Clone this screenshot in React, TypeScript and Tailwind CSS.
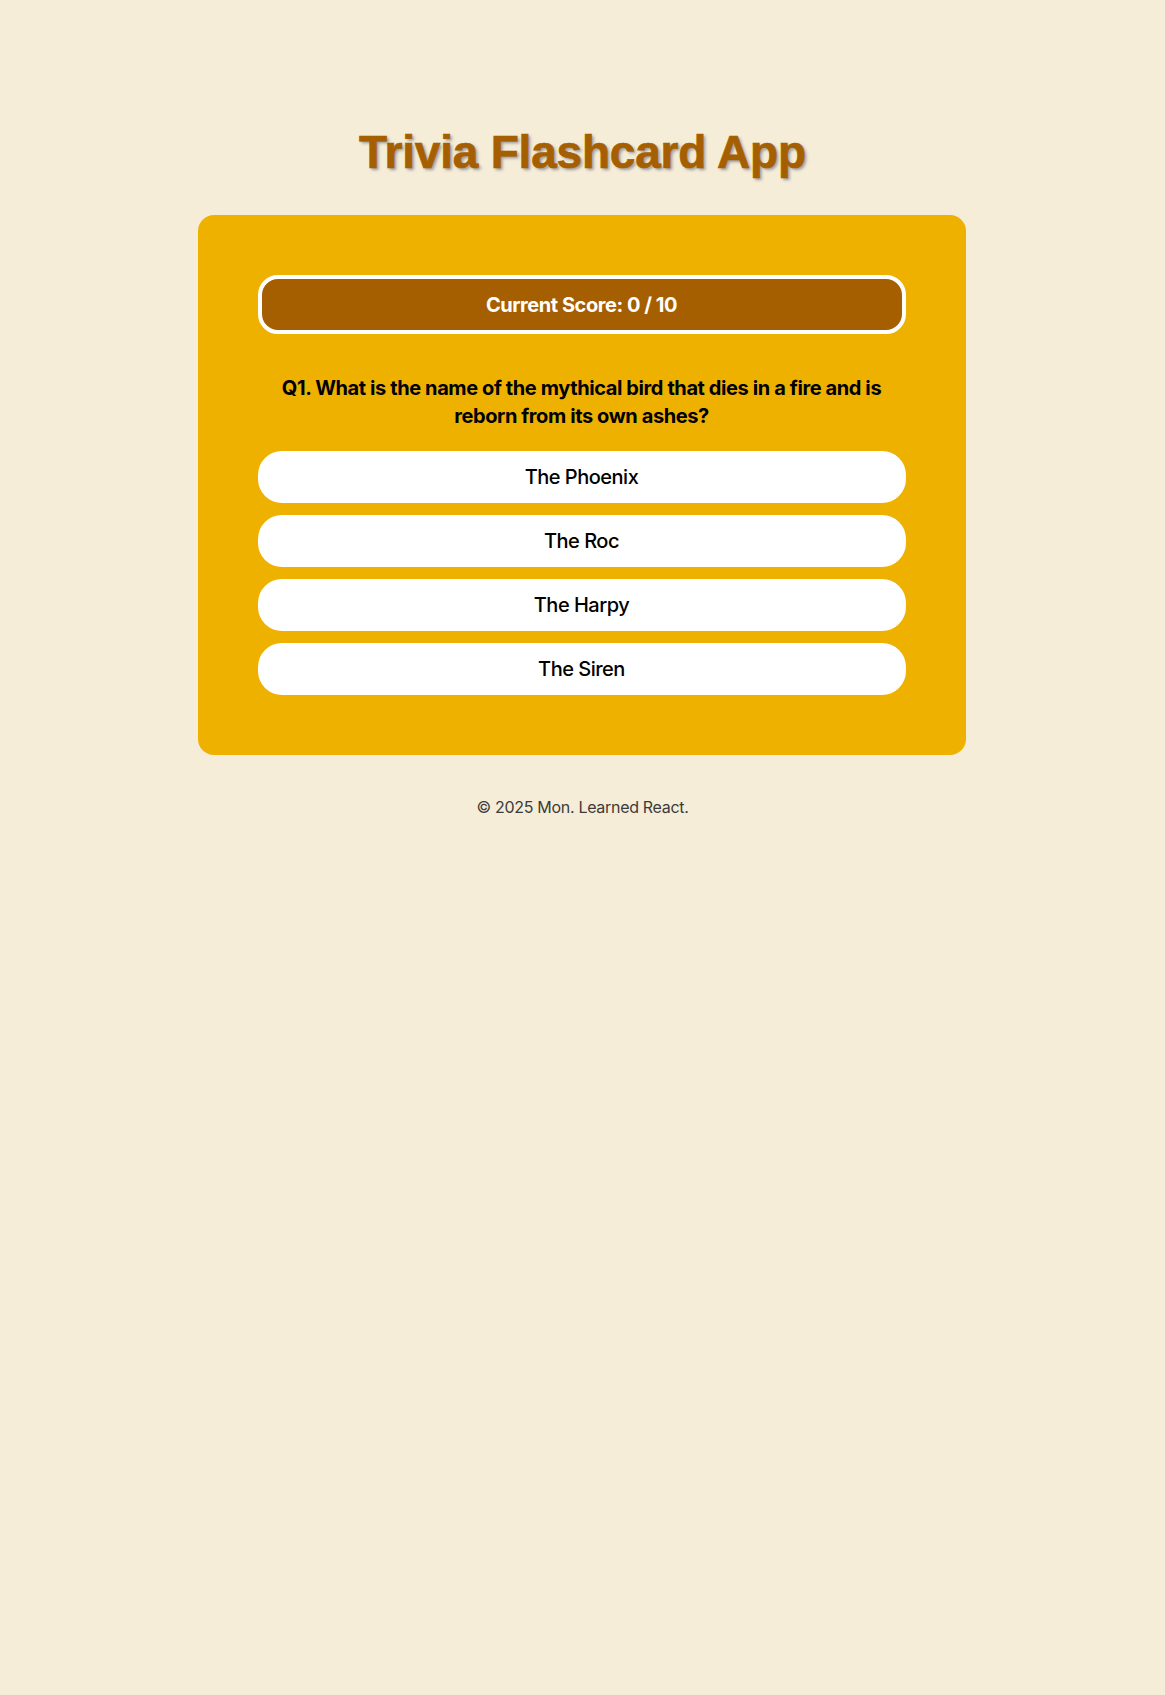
import { useState } from 'react';

const question = {
  text: 'Q1. What is the name of the mythical bird that dies in a fire and is reborn from its own ashes?',
  options: ['The Phoenix', 'The Roc', 'The Harpy', 'The Siren'],
};

export default function App() {
  const [score] = useState(0);

  return (
    <div className="min-h-[1695px] bg-[#f5edd8] font-['Inter',sans-serif]">
      <div className="flex flex-col items-center pt-[124px]">
        <h1 className="font-['Liberation_Sans',Arial,sans-serif] text-[46px] leading-[56px] font-bold tracking-[-0.2px] text-[#a65f00] [-webkit-text-stroke:0.7px_#a65f00] [text-shadow:2px_2px_3px_rgba(80,85,110,0.55)]">
          Trivia Flashcard App
        </h1>

        <div className="mt-[35px] w-[768px] -translate-x-px rounded-2xl bg-[#efb100] p-[60px]">
          <div className="flex h-[59px] items-center justify-center rounded-[20px] border-4 border-white bg-[#a65f00] text-xl font-bold tracking-[-0.45px] text-white">
            Current Score: {score} / 10
          </div>

          <h2 className="mt-[40px] text-center text-xl leading-[28px] font-bold tracking-[-0.4px] text-black">
            {question.text}
          </h2>

          <div className="mt-[21px] flex flex-col gap-3">
            {question.options.map((opt) => (
              <button
                key={opt}
                className="h-[52px] w-full rounded-3xl bg-white text-xl font-medium tracking-[-0.5px] text-black"
              >
                {opt}
              </button>
            ))}
          </div>
        </div>

        <p className="mt-[40px] text-base tracking-[-0.3px] text-[#3b3b3b]">© 2025 Mon. Learned React.</p>
      </div>
    </div>
  );
}
